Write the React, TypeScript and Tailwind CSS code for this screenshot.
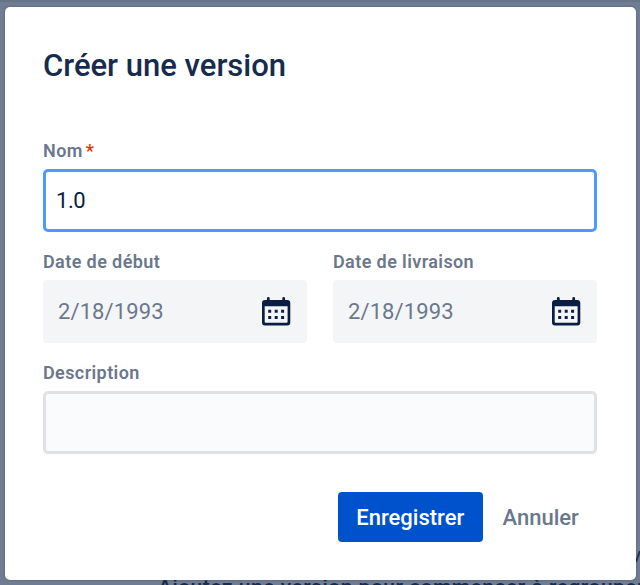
import React from 'react';

function CalendarIcon() {
  return (
    <svg width="29" height="29" viewBox="0 0 29 29" className="shrink-0" aria-hidden="true">
      <path
        fill="#091E42"
        fillRule="evenodd"
        d="M6.300 0a1.400 1.400 0 0 1 1.400 1.400V3h12.600V1.400a1.400 1.400 0 0 1 2.800 0V3H25.300a3 3 0 0 1 3 3v19.500a3 3 0 0 1-3 3H3a3 3 0 0 1-3-3V6a3 3 0 0 1 3-3h1.900V1.400A1.400 1.400 0 0 1 6.300 0ZM2.700 9.200v15.500a1 1 0 0 0 1 1h20.900a1 1 0 0 0 1-1V9.200Z"
      />
      <path
        fill="#091E42"
        d="M6.200 12.800h3v3h-3zM12.700 12.800h3v3h-3zM19.100 12.800h3v3h-3zM6.200 19h3v3h-3zM12.700 19h3v3h-3zM19.100 19h3v3h-3z"
      />
    </svg>
  );
}

function Label({ children, required }: { children: React.ReactNode; required?: boolean }) {
  return (
    <label className="flex h-[28px] items-start text-[18px] leading-[20px] font-semibold tracking-[0.4px] text-[#6B778C]">
      {children}
      {required && <span className="ml-[3px] text-[#DE350B]">*</span>}
    </label>
  );
}

function DateField({ label }: { label: string }) {
  return (
    <div>
      <Label>{label}</Label>
      <div className="flex h-[63px] w-[264px] items-center justify-between rounded-[4px] bg-[#F4F5F7] pr-[16.500px] pl-[15px]">
        <span className="text-[22px] leading-[28px] tracking-[0.1px] text-[#6B778C]">2/18/1993</span>
        <CalendarIcon />
      </div>
    </div>
  );
}

export default function App() {
  return (
    <div className="relative h-[585px] w-[640px] overflow-hidden bg-[#6F7C92] pt-[7px] pl-[5px] font-['Roboto','Liberation_Sans',sans-serif]">
      <div className="absolute inset-x-0 top-0 h-[2px] bg-[#66748A]" />
      <p className="absolute top-[573px] left-[158px] text-[21px] leading-[28px] font-medium tracking-[0.5px] whitespace-nowrap text-[#172B4D]">
        Ajoutez une version pour commencer à regrouper
      </p>
      <p className="absolute top-[541px] left-[631px] text-[21px] leading-[28px] whitespace-nowrap text-[#172B4D]">ve</p>
      <section
        role="dialog"
        className="relative flex h-[573px] w-[630.5px] flex-col rounded-[5px] bg-white px-[38px] shadow-[0_0_2px_rgba(9,30,66,0.4)]"
      >
        <h1 className="mt-[38px] h-[96px] text-[31px] leading-[41px] font-medium text-[#172B4D]">Créer une version</h1>
        <Label required>Nom</Label>
        <div className="flex h-[63px] w-[554px] items-center rounded-[5px] border-3 border-[#4C9AFF] bg-white pl-[10px] text-[22px] leading-[28px] tracking-[-0.4px] text-[#091E42]">
          1.0
        </div>
        <div className="mt-[20px] flex gap-[26px]">
          <DateField label="Date de début" />
          <DateField label="Date de livraison" />
        </div>
        <div className="mt-[20px]">
          <Label>Description</Label>
          <div className="h-[63px] w-[554px] rounded-[5px] border-3 border-[#DFE1E6] bg-[#FAFBFC]" />
        </div>
        <div className="mt-[38px] flex items-center">
          <button className="ml-[294.500px] h-[50px] w-[145.500px] rounded-[4px] bg-[#0052CC] pt-[2px] text-[22px] leading-[28px] font-medium text-white">
            Enregistrer
          </button>
          <button className="ml-[19.500px] pt-[2px] text-[22px] leading-[28px] font-medium text-[#6B778C]">Annuler</button>
        </div>
      </section>
    </div>
  );
}
